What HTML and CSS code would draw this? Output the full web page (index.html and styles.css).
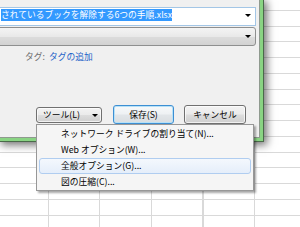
FILE: index.html
```html
<!DOCTYPE html>
<html lang="ja">
<head>
<meta charset="utf-8">
<title>名前を付けて保存</title>
<link rel="stylesheet" href="styles.css">
</head>
<body>
<div class="dialog">
  <div class="frame-green">
    <div class="frame-inner">
      <div class="field filename">
        <span class="sel">されているブックを解除する6つの手順.xlsx</span>
        <span class="arrow"></span>
      </div>
      <div class="field filetype">
        <span class="arrow"></span>
      </div>
      <div class="tags"><span class="tag-label">タグ:</span><span class="tag-link">タグの追加</span></div>
      <div class="buttons">
        <div class="btn tools"><span>ツール(L)</span><span class="arrow"></span></div>
        <div class="btn default">保存(S)</div>
        <div class="btn cancel">キャンセル</div>
      </div>
    </div>
  </div>
</div>
<ul class="menu">
  <li>ネットワーク ドライブの割り当て(N)...</li>
  <li>Web オプション(W)...</li>
  <li class="hot">全般オプション(G)...</li>
  <li>図の圧縮(C)...</li>
</ul>
</body>
</html>
```

FILE: styles.css
```css
* {
  box-sizing: border-box;
  margin: 0;
  padding: 0;
}

html, body {
  width: 300px;
  height: 227px;
  overflow: hidden;
}

body {
  font-family: "Noto Sans CJK JP", "Noto Sans", sans-serif;
  font-size: 8.75px;
  color: #000;
  background-color: #fff;
  background-image:
    repeating-linear-gradient(to right, #d9d9d9 -3.5px, #d9d9d9 -2.5px, transparent -2.5px, transparent 48px),
    repeating-linear-gradient(to bottom, #d9d9d9 -5.75px, #d9d9d9 -4.75px, transparent -4.75px, transparent 10px);
}

/* dialog window frame */
.dialog {
  width: 264px;
  height: 142px;
  border-right: 1px solid #4a6a4a;
  border-bottom: 1px solid #4a6a4a;
  box-shadow: 2px 2px 8px 1px rgba(0, 0, 0, 0.55);
}

.frame-green {
  height: 100%;
  border-right: 3px solid #89d483;
  border-bottom: 3px solid #89d483;
}

.frame-inner {
  height: 100%;
  border-right: 1px solid #8f9a8f;
  border-bottom: 1px solid #8f9a8f;
  background: #f0f0f0;
  padding-top: 7px;
  display: flex;
  flex-direction: column;
  overflow: hidden;
}

/* inputs */
.field {
  height: 19px;
  margin-left: -20px;
  margin-right: 3px;
  display: flex;
  align-items: center;
  flex-shrink: 0;
}

.filename {
  border: 1px solid #a3c6e6;
  background: #fff;
  padding-left: 20px;
  align-items: flex-start;
  padding-top: 1px;
}

.sel {
  display: block;
  height: 12px;
  line-height: 12px;
  background: #3399ff;
  color: #fff;
  white-space: nowrap;
}

.filename .arrow {
  margin-top: 5px;
}

.arrow {
  width: 0;
  height: 0;
  margin-left: auto;
  margin-right: 4px;
  border-left: 3px solid transparent;
  border-right: 3px solid transparent;
  border-top: 3px solid #000;
}

.filetype {
  margin-top: 1px;
  border: 1px solid #8e8f8f;
  border-radius: 3px;
  background: linear-gradient(#f4f4f4, #e9e9e9 50%, #dcdcdc 52%, #d2d2d2);
}

/* tags */
.tags {
  margin-top: 5px;
  padding-left: 25px;
  height: 12px;
  line-height: 12px;
  white-space: nowrap;
}

.tag-label {
  color: #6d6d6d;
  margin-right: 4px;
}

.tag-link {
  color: #1e62c8;
}

/* buttons */
.buttons {
  margin-top: 42px;
  padding-left: 36px;
  display: flex;
  align-items: flex-start;
}

.btn {
  height: 19px;
  border: 1px solid #707070;
  border-radius: 3px;
  background: linear-gradient(#f3f3f3, #ebebeb 48%, #dddddd 52%, #cfcfcf);
  box-shadow: inset 0 0 0 1px rgba(255, 255, 255, 0.7);
  display: flex;
  align-items: center;
  justify-content: center;
  white-space: nowrap;
  line-height: 12px;
}

.tools {
  width: 66px;
  height: 16px;
  margin-top: 2px;
  justify-content: flex-start;
  padding-left: 6px;
}

.tools .arrow {
  margin-right: 3px;
}

.default {
  width: 61px;
  margin-left: 11px;
  border-color: #3d8fd3;
  background: linear-gradient(#f7f9fa, #eef1f3 48%, #e2e6e9 52%, #d9dde0);
  box-shadow: inset 0 0 0 1px #b7e1f7;
}

.cancel {
  width: 62px;
  margin-left: 10px;
}

/* drop-down menu of the tools button */
.menu {
  position: absolute;
  left: 36px;
  top: 124px;
  width: 218px;
  height: 67px;
  list-style: none;
  background: #f5f5f5;
  border: 1px solid #979797;
  box-shadow: 2px 2px 2px rgba(0, 0, 0, 0.35);
  padding: 1px 2px 0;
}

.menu li {
  height: 16px;
  line-height: 14px;
  border: 1px solid transparent;
  padding-left: 21px;
  white-space: nowrap;
}

.menu li.hot {
  border-color: #b0cdf0;
  border-radius: 3px;
  background: linear-gradient(#f4f8fd, #e5eefa);
}
```
